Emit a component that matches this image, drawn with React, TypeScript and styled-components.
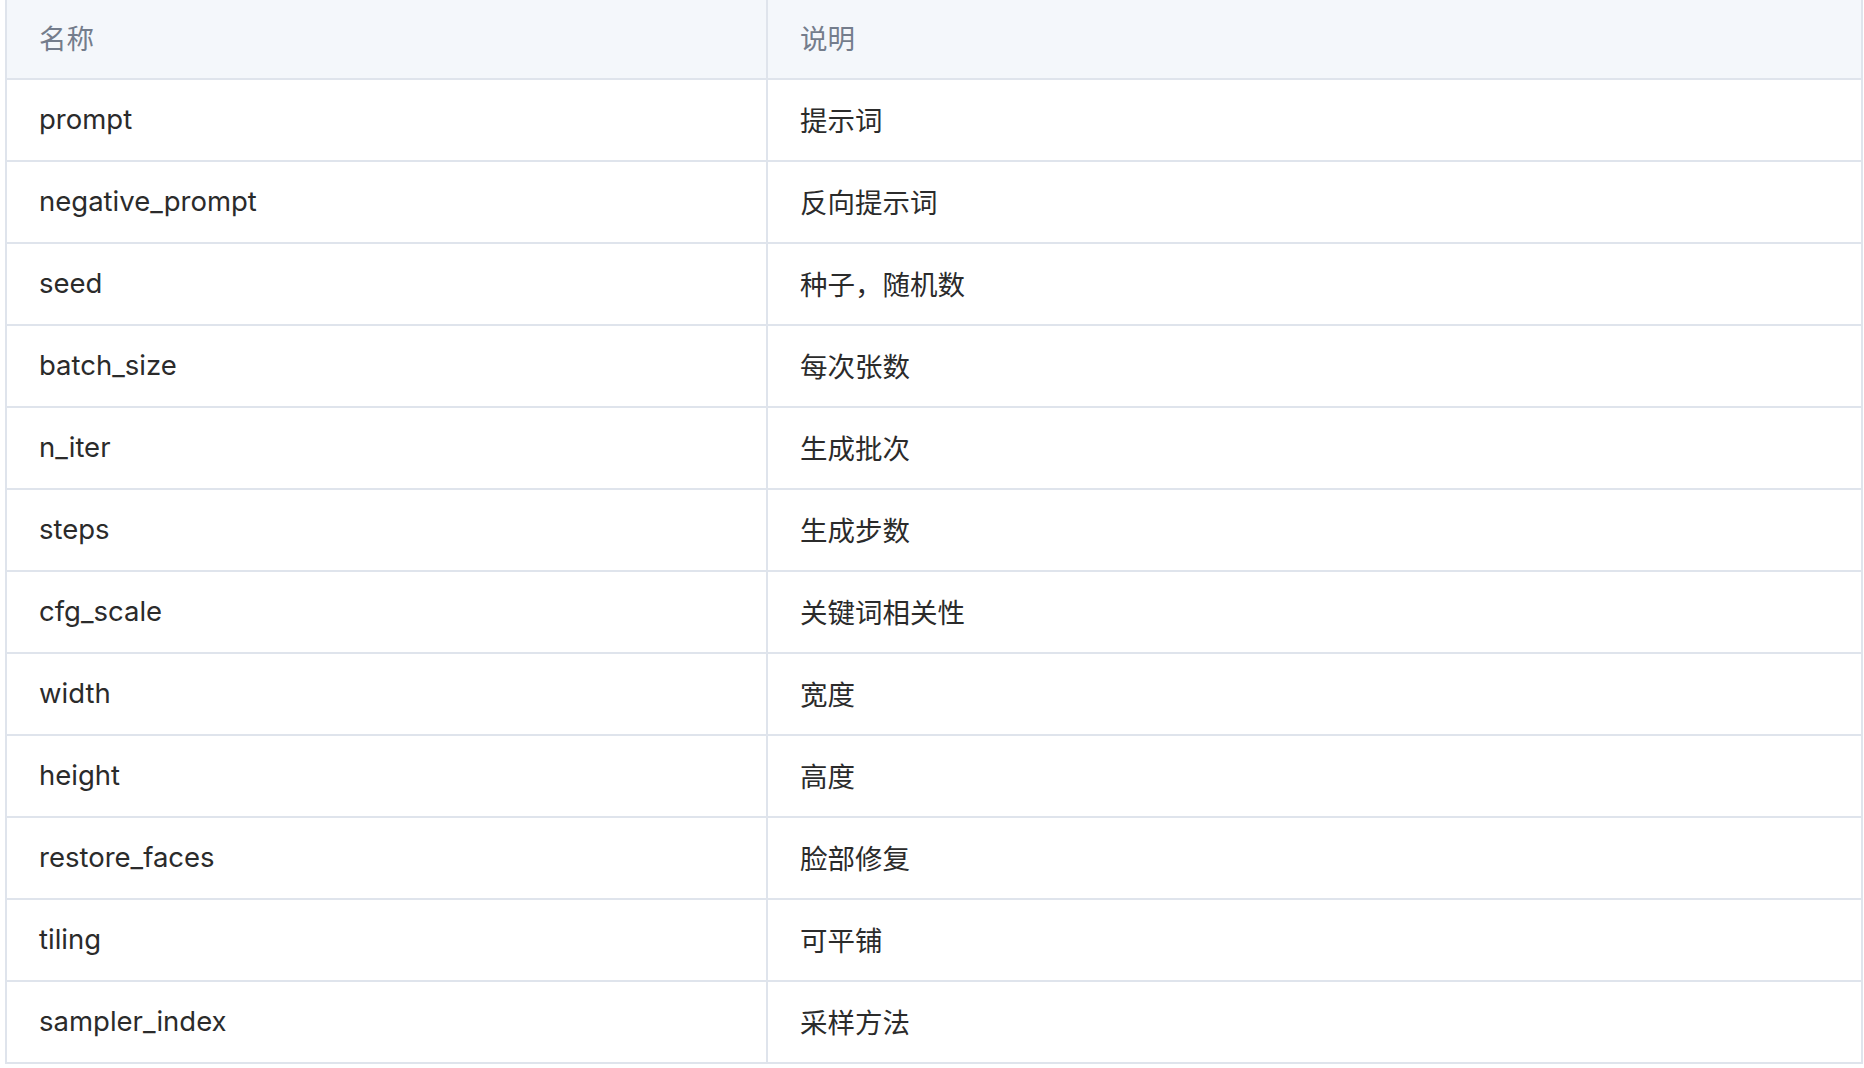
import React from "react";
import styled, { createGlobalStyle } from "styled-components";

const Global = createGlobalStyle`
  html, body { margin: 0; padding: 0; background: #ffffff; }
  body { font-family: "Inter", "Noto Sans CJK SC", sans-serif; }
`;

const Table = styled.div`
  margin-left: 5px;
  width: 1858px;
  box-sizing: border-box;
  border-left: 2px solid #dfe4ec;
  border-right: 2px solid #dfe4ec;
`;

const Row = styled.div<{ $header?: boolean }>`
  display: grid;
  grid-template-columns: 761px 1fr;
  height: ${(p) => (p.$header ? 80 : 82)}px;
  box-sizing: border-box;
  border-bottom: 2px solid #dfe4ec;
  background: ${(p) => (p.$header ? "#f4f7fb" : "#ffffff")};
`;

const Cell = styled.div<{ $header?: boolean; $first?: boolean }>`
  display: flex;
  align-items: center;
  box-sizing: border-box;
  padding-left: 32px;
  padding-bottom: ${(p) => (p.$header ? 4 : 2)}px;
  border-right: ${(p) => (p.$first ? "2px solid #dfe4ec" : "none")};
  font-family: "Inter", "Noto Sans CJK SC", sans-serif;
  font-size: 27.5px;
  color: ${(p) => (p.$header ? "#747d8c" : "#2b2b2b")};
  white-space: nowrap;
`;

const rows: [string, string][] = [
  ["prompt", "提示词"],
  ["negative_prompt", "反向提示词"],
  ["seed", "种子，随机数"],
  ["batch_size", "每次张数"],
  ["n_iter", "生成批次"],
  ["steps", "生成步数"],
  ["cfg_scale", "关键词相关性"],
  ["width", "宽度"],
  ["height", "高度"],
  ["restore_faces", "脸部修复"],
  ["tiling", "可平铺"],
  ["sampler_index", "采样方法"],
];

export default function App() {
  return (
    <>
      <Global />
      <Table>
        <Row $header>
          <Cell $header $first>名称</Cell>
          <Cell $header>说明</Cell>
        </Row>
        {rows.map(([name, desc]) => (
          <Row key={name}>
            <Cell $first>{name}</Cell>
            <Cell>{desc}</Cell>
          </Row>
        ))}
      </Table>
    </>
  );
}
